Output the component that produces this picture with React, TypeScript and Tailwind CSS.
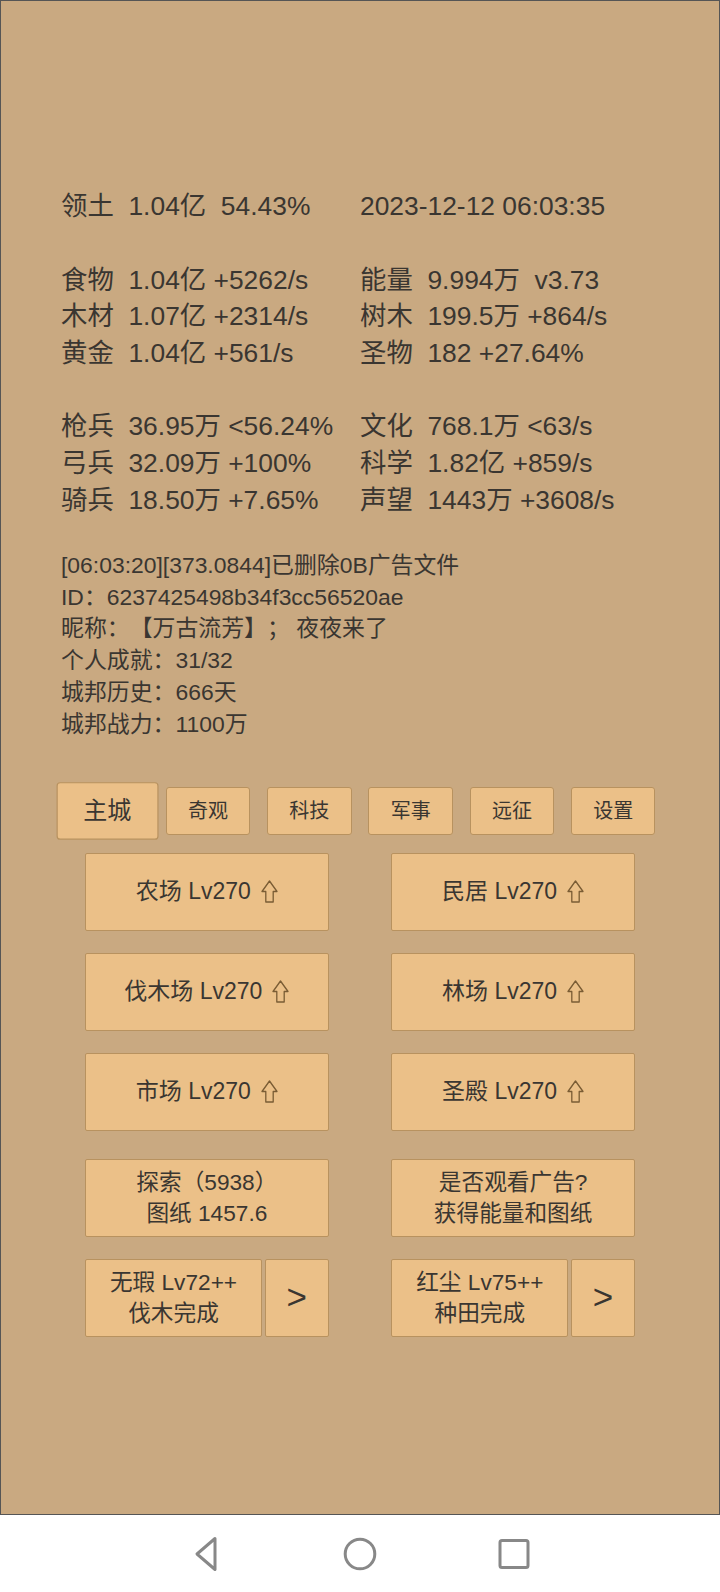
import React from "react";

const stats: [string, string][] = [
  ["领土  1.04亿  54.43%", "2023-12-12 06:03:35"],
  ["", ""],
  ["食物  1.04亿 +5262/s", "能量  9.994万  v3.73"],
  ["木材  1.07亿 +2314/s", "树木  199.5万 +864/s"],
  ["黄金  1.04亿 +561/s", "圣物  182 +27.64%"],
  ["", ""],
  ["枪兵  36.95万 <56.24%", "文化  768.1万 <63/s"],
  ["弓兵  32.09万 +100%", "科学  1.82亿 +859/s"],
  ["骑兵  18.50万 +7.65%", "声望  1443万 +3608/s"],
];

const info = [
  "[06:03:20][373.0844]已删除0B广告文件",
  "ID：6237425498b34f3cc56520ae",
  "昵称：【万古流芳】； 夜夜来了",
  "个人成就：31/32",
  "城邦历史：666天",
  "城邦战力：1100万",
];

const tabs = ["主城", "奇观", "科技", "军事", "远征", "设置"];

function UpArrow() {
  return (
    <svg width="17" height="23" viewBox="0 0 17 23" className="ml-[10px] shrink-0">
      <path
        d="M8.5 1 L16 11.5 H12.2 V22 H4.8 V11.5 H1 Z"
        fill="none"
        stroke="#7a5c34"
        strokeWidth="1.3"
        strokeLinejoin="round"
      />
    </svg>
  );
}

function BuildBtn({ name }: { name: string }) {
  return (
    <div className="w-[243.7px] h-[78px] bg-[#ebc088] border border-[#b8925f] rounded-[2px] flex items-center justify-center text-[23px] text-[#3a3631]">
      <span className="whitespace-pre">{name}</span>
      <UpArrow />
    </div>
  );
}

function TwoLineBtn({ a, b }: { a: string; b: string }) {
  return (
    <div className="w-[243.7px] h-[78px] bg-[#ebc088] border border-[#b8925f] rounded-[2px] flex flex-col items-center justify-center text-[22.67px] leading-[31.5px] text-[#3a3631]">
      <span className="whitespace-pre">{a}</span>
      <span className="whitespace-pre">{b}</span>
    </div>
  );
}

function SplitBtn({ a, b }: { a: string; b: string }) {
  return (
    <div className="w-[243.7px] h-[78px] flex gap-[2.7px]">
      <div className="w-[177px] h-full bg-[#ebc088] border border-[#b8925f] rounded-[2px] flex flex-col items-center justify-center text-[22.67px] leading-[31.5px] text-[#3a3631]">
        <span className="whitespace-pre">{a}</span>
        <span className="whitespace-pre">{b}</span>
      </div>
      <div className="flex-1 h-full bg-[#ebc088] border border-[#b8925f] rounded-[2px] flex items-center justify-center text-[35px] leading-none text-[#3a3631]">
        <span className="-mt-[3px]">&gt;</span>
      </div>
    </div>
  );
}

export default function App() {
  return (
    <div className="w-[720px] h-[1592px] flex flex-col font-['Liberation_Sans','Noto_Sans_CJK_SC',sans-serif] [text-spacing-trim:space-all] bg-white">
      <div className="h-[1515px] w-full bg-[#c9a981] border border-[#555555] flex flex-col pt-[187.4px] text-[#3a3631]">
        <div className="pl-[60px] flex flex-col text-[26.4px] leading-[36.67px]">
          {stats.map(([l, r], i) => (
            <div key={i} className="flex h-[36.67px]">
              <div className="w-[299px] whitespace-pre">{l}</div>
              <div className="whitespace-pre">{r}</div>
            </div>
          ))}
        </div>
        <div className="pl-[60px] mt-[31.4px] flex flex-col text-[22.9px] leading-[31.9px]">
          {info.map((t, i) => (
            <div key={i} className="h-[31.9px] whitespace-pre">
              {t}
            </div>
          ))}
        </div>
        <div className="mt-[41px] h-[58px] flex justify-center items-center">
          {tabs.map((t, i) => (
            <div key={t} className="w-[101.3px] h-full flex items-center justify-center">
              <div
                className={`w-[84.5px] h-[48.3px] bg-[#ebc088] border border-[#b8925f] rounded-[3px] flex items-center justify-center text-[20px] text-[#3a3631] ${
                  i === 0 ? "scale-[1.2]" : ""
                }`}
              >
                {t}
              </div>
            </div>
          ))}
        </div>
        <div className="mt-[12.5px] flex flex-col items-center">
          <div className="flex gap-[62.6px]">
            <BuildBtn name="农场 Lv270" />
            <BuildBtn name="民居 Lv270" />
          </div>
          <div className="flex gap-[62.6px] mt-[22px]">
            <BuildBtn name="伐木场 Lv270" />
            <BuildBtn name="林场 Lv270" />
          </div>
          <div className="flex gap-[62.6px] mt-[22px]">
            <BuildBtn name="市场 Lv270" />
            <BuildBtn name="圣殿 Lv270" />
          </div>
          <div className="flex gap-[62.6px] mt-[28.5px]">
            <TwoLineBtn a="探索（5938）" b="图纸 1457.6" />
            <TwoLineBtn a="是否观看广告?" b="获得能量和图纸" />
          </div>
          <div className="flex gap-[62.6px] mt-[22px]">
            <SplitBtn a="无瑕 Lv72++" b="伐木完成" />
            <SplitBtn a="红尘 Lv75++" b="种田完成" />
          </div>
        </div>
      </div>
      <div className="h-[77px] w-full bg-white flex justify-center items-center">
        <div className="w-[154px] flex justify-center">
          <svg width="30" height="36" viewBox="0 0 30 36">
            <path
              d="M24 2.5 L6 18 L24 33.5 Z"
              fill="none"
              stroke="#888888"
              strokeWidth="3"
              strokeLinejoin="round"
            />
          </svg>
        </div>
        <div className="w-[154px] flex justify-center">
          <svg width="36" height="36" viewBox="0 0 36 36">
            <circle cx="18" cy="18" r="14.8" fill="none" stroke="#888888" strokeWidth="3" />
          </svg>
        </div>
        <div className="w-[154px] flex justify-center">
          <svg width="34" height="34" viewBox="0 0 34 34">
            <rect x="3" y="3.5" width="28" height="27" rx="2" fill="none" stroke="#888888" strokeWidth="3" />
          </svg>
        </div>
      </div>
    </div>
  );
}
